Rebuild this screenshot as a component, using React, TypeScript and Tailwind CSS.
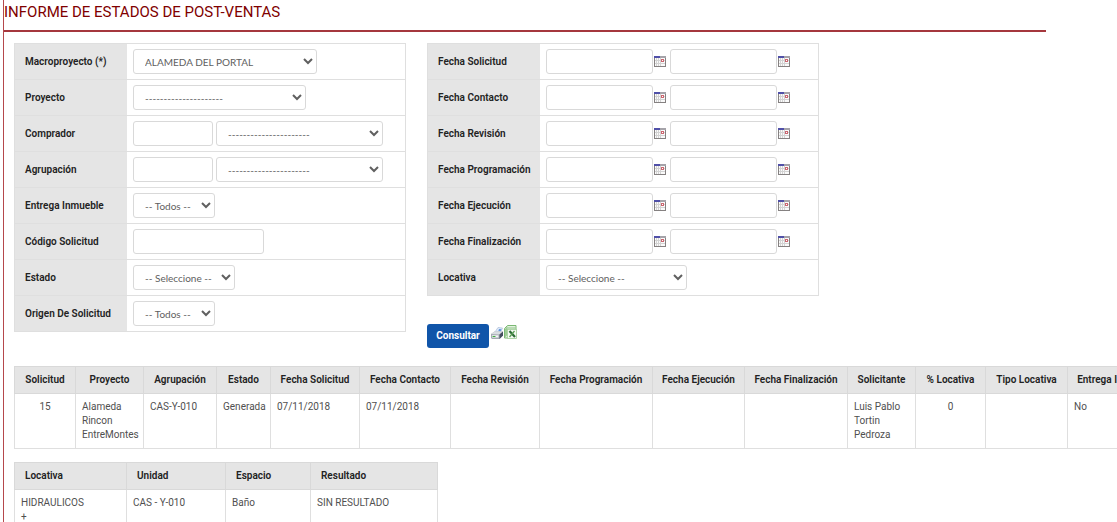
import type { ReactNode } from "react";

interface Column {
  label: string;
  value: string;
  width: string;
  center?: boolean;
}

const requestColumns: Column[] = [
  { label: "Solicitud", value: "15", width: "w-[61px]", center: true },
  { label: "Proyecto", value: "Alameda Rincon EntreMontes", width: "w-[68px]" },
  { label: "Agrupación", value: "CAS-Y-010", width: "w-[73px]" },
  { label: "Estado", value: "Generada", width: "w-[54px]" },
  { label: "Fecha Solicitud", value: "07/11/2018", width: "w-[89px]" },
  { label: "Fecha Contacto", value: "07/11/2018", width: "w-[91px]" },
  { label: "Fecha Revisión", value: "", width: "w-[89px]" },
  { label: "Fecha Programación", value: "", width: "w-[113px]" },
  { label: "Fecha Ejecución", value: "", width: "w-[92px]" },
  { label: "Fecha Finalización", value: "", width: "w-[103px]" },
  { label: "Solicitante", value: "Luis Pablo Tortin Pedroza", width: "w-[68px]" },
  { label: "% Locativa", value: "0", width: "w-[70px]", center: true },
  { label: "Tipo Locativa", value: "", width: "w-[82px]" },
  { label: "Entrega Inmueble", value: "No", width: "w-[98px]" },
];

const dateFields = [
  "Fecha Solicitud",
  "Fecha Contacto",
  "Fecha Revisión",
  "Fecha Programación",
  "Fecha Ejecución",
  "Fecha Finalización",
];

function CalendarIcon() {
  return (
    <svg width="12" height="12" viewBox="0 0 12 12" shapeRendering="crispEdges">
      <rect x="0" y="0" width="12" height="11" fill="#858181" />
      <rect x="1" y="2" width="10" height="8" fill="#fafafa" />
      <rect x="0" y="0" width="12" height="2" fill="#a5a3a9" />
      <rect x="0" y="0" width="6" height="2" fill="#5050a8" />
      <path
        d="M2.5 2v8M4.5 2v8M6.5 2v8M1 4.5h10M1 7.5h10"
        stroke="#d3d3d3"
        strokeWidth="1"
      />
      <rect x="7.5" y="3.5" width="2" height="2" fill="#fff" stroke="#cc6670" />
    </svg>
  );
}

function PrinterIcon() {
  return (
    <svg width="12" height="12" viewBox="0 0 12 12">
      <path d="M4 5l3-4.500 4.500 .5-2 4.500z" fill="#dfeafa" stroke="#9fb2d0" strokeWidth=".6" />
      <path d="M8 2l2.500 .3-1 2.200-2.200-.3z" fill="#5d94dc" />
      <path d="M0 7l4-2.800 8 .3v4l-3.500 3.500H1L0 11z" fill="#a4aab2" />
      <path d="M0 7l4-2.800 8 .3-3.500 3z" fill="#d9dde1" />
      <path d="M8.500 7.500l3.500-3v4L8.500 12z" fill="#454f60" />
      <path d="M1 8.300h6.500v2.200H1z" fill="#f5f7f8" />
      <path d="M1.500 9.500h3" stroke="#43ad43" />
    </svg>
  );
}

function ExcelIcon() {
  return (
    <svg width="13" height="14" viewBox="0 0 13 14">
      <path d="M.5 3.500L3.500 .5h8.500v12.500H.5z" fill="#e2f1de" stroke="#7ab873" />
      <path d="M1 4l2.500-3v9L1 12.500z" fill="#9ccc94" />
      <path d="M3.500 3h8" stroke="#8fc588" />
      <rect x="3.500" y="4.500" width="9" height="9" fill="#f4faf2" stroke="#a3cf9c" strokeWidth=".8" />
      <path d="M5.500 6l5.500 6" stroke="#2c6b36" strokeWidth="2.200" />
      <path d="M10.500 6l-5 6" stroke="#5a9e55" strokeWidth="1.300" />
    </svg>
  );
}

interface FormRowProps {
  id: string;
  label: string;
  children: ReactNode;
}

function FormRow({ id, label, children }: FormRowProps) {
  return (
    <div className="flex h-9 border-b border-[#dfdfdf]">
      <label
        htmlFor={id}
        className="flex w-28 shrink-0 items-center whitespace-nowrap bg-[#e5e5e5] pl-[10px] font-semibold text-[#222]"
      >
        {label}
      </label>
      <div className="flex flex-1 items-center gap-[3px] pl-[6px]">{children}</div>
    </div>
  );
}

interface SelectProps {
  id?: string;
  label?: string;
  option: string;
  width: string;
}

function Select({ id, label, option, width }: SelectProps) {
  return (
    <select
      id={id}
      aria-label={label}
      className={`h-[25px] rounded-[3px] border border-[#d9d9d9] bg-white pl-[7px] font-['Lato',sans-serif] text-[#606060] ${width}`}
    >
      <option>{option}</option>
    </select>
  );
}

interface TextBoxProps {
  id?: string;
  label?: string;
  width: string;
}

function TextBox({ id, label, width }: TextBoxProps) {
  return (
    <input
      type="text"
      id={id}
      aria-label={label}
      className={`h-[25px] rounded-[3px] border border-[#d9d9d9] bg-white px-2 text-[#606060] ${width}`}
    />
  );
}

function DateRange({ id, label }: { id: string; label: string }) {
  return (
    <div className="flex gap-1">
      <div className="flex items-center gap-px">
        <TextBox id={id} width="w-[107px]" />
        <button type="button" aria-label={`${label} desde`}>
          <CalendarIcon />
        </button>
      </div>
      <div className="flex items-center gap-px">
        <TextBox label={`${label} hasta`} width="w-[107px]" />
        <button type="button" aria-label={`${label} hasta`}>
          <CalendarIcon />
        </button>
      </div>
    </div>
  );
}

function HeaderCell({ label, left }: { label: string; left?: boolean }) {
  return (
    <th
      scope="col"
      className={`h-[27px] whitespace-nowrap border border-[#d9d9d9] bg-[#e5e5e5] font-semibold text-[#222] ${left ? "pl-[10px] text-left" : "text-center"}`}
    >
      {label}
    </th>
  );
}

function BodyCell({ value, center }: { value: ReactNode; center?: boolean }) {
  return (
    <td
      className={`border border-[#dfdfdf] px-[6px] py-[6px] align-top ${center ? "text-center" : "text-left"}`}
    >
      {value}
    </td>
  );
}

export default function App() {
  return (
    <div className="h-screen overflow-hidden bg-white pl-[3px] font-['Roboto',sans-serif] text-[10px] leading-[14px] text-[#505050]">
      <main className="min-h-full border-l border-[#b5484c]">
        <h1 className="mr-[71px] h-8 border-b-2 border-[#a5373d] text-[15px] leading-6 text-[#800000]">
          INFORME DE ESTADOS DE POST-VENTAS
        </h1>

        <form className="flex items-start gap-[21px] pl-[10px] pt-[11px]">
          <div className="w-[392px] shrink-0 border-x border-t border-[#dfdfdf]">
            <FormRow id="macro" label="Macroproyecto (*)">
              <Select id="macro" option="ALAMEDA DEL PORTAL" width="w-[184px]" />
            </FormRow>
            <FormRow id="proyecto" label="Proyecto">
              <Select id="proyecto" option="---------------------" width="w-[173px]" />
            </FormRow>
            <FormRow id="comprador" label="Comprador">
              <TextBox id="comprador" width="w-20" />
              <Select label="Comprador" option="----------------------" width="w-[167px]" />
            </FormRow>
            <FormRow id="agrupacion" label="Agrupación">
              <TextBox id="agrupacion" width="w-20" />
              <Select label="Agrupación" option="----------------------" width="w-[167px]" />
            </FormRow>
            <FormRow id="entrega" label="Entrega Inmueble">
              <Select id="entrega" option="-- Todos --" width="w-[82px]" />
            </FormRow>
            <FormRow id="codigo" label="Código Solicitud">
              <TextBox id="codigo" width="w-[131px]" />
            </FormRow>
            <FormRow id="estado" label="Estado">
              <Select id="estado" option="-- Seleccione --" width="w-[102px]" />
            </FormRow>
            <FormRow id="origen" label="Origen De Solicitud">
              <Select id="origen" option="-- Todos --" width="w-[82px]" />
            </FormRow>
          </div>

          <div className="w-[392px] shrink-0">
            <div className="border-x border-t border-[#dfdfdf]">
              {dateFields.map((field, idx) => (
                <FormRow key={field} id={`fecha-${idx}`} label={field}>
                  <DateRange id={`fecha-${idx}`} label={field} />
                </FormRow>
              ))}
              <FormRow id="locativa" label="Locativa">
                <Select id="locativa" option="-- Seleccione --" width="w-[141px]" />
              </FormRow>
            </div>
            <div className="mt-7 flex items-start gap-px">
              <button
                type="button"
                className="mr-px h-6 w-[62px] rounded-[3px] bg-[#1055a9] font-bold text-white"
              >
                Consultar
              </button>
              <button type="button" aria-label="Imprimir" className="pt-[3px]">
                <PrinterIcon />
              </button>
              <button type="button" aria-label="Exportar a Excel" className="pt-px">
                <ExcelIcon />
              </button>
            </div>
          </div>
        </form>

        <div className="flex flex-col items-start gap-[13px] pl-[10px] pt-[18px]">
          <table className="w-[1151px] table-fixed border-collapse">
            <colgroup>
              {requestColumns.map((col) => (
                <col key={col.label} className={col.width} />
              ))}
            </colgroup>
            <thead>
              <tr>
                {requestColumns.map((col) => (
                  <HeaderCell key={col.label} label={col.label} />
                ))}
              </tr>
            </thead>
            <tbody>
              <tr>
                {requestColumns.map((col) => (
                  <BodyCell key={col.label} value={col.value} center={col.center} />
                ))}
              </tr>
            </tbody>
          </table>

          <table className="w-[423px] table-fixed border-collapse">
            <colgroup>
              <col className="w-[112px]" />
              <col className="w-[99px]" />
              <col className="w-[85px]" />
              <col className="w-[127px]" />
            </colgroup>
            <thead>
              <tr>
                <HeaderCell label="Locativa" left />
                <HeaderCell label="Unidad" left />
                <HeaderCell label="Espacio" left />
                <HeaderCell label="Resultado" left />
              </tr>
            </thead>
            <tbody>
              <tr>
                <BodyCell
                  value={
                    <>
                      HIDRAULICOS
                      <br />+
                    </>
                  }
                />
                <BodyCell value="CAS - Y-010" />
                <BodyCell value="Baño" />
                <BodyCell value="SIN RESULTADO" />
              </tr>
            </tbody>
          </table>
        </div>
      </main>
    </div>
  );
}
